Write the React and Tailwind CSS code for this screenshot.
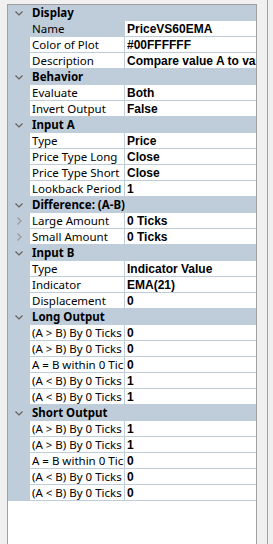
const sections = [
  {
    title: "Display",
    rows: [
      ["Name", "PriceVS60EMA", { selected: true }],
      ["Color of Plot", "#00FFFFFF"],
      ["Description", "Compare value A to value B"],
    ],
  },
  {
    title: "Behavior",
    rows: [
      ["Evaluate", "Both"],
      ["Invert Output", "False"],
    ],
  },
  {
    title: "Input A",
    rows: [
      ["Type", "Price"],
      ["Price Type Long", "Close"],
      ["Price Type Short", "Close"],
      ["Lookback Period", "1"],
    ],
  },
  {
    title: "Difference: (A-B)",
    rows: [
      ["Large Amount", "0 Ticks", { expand: true }],
      ["Small Amount", "0 Ticks", { expand: true }],
    ],
  },
  {
    title: "Input B",
    rows: [
      ["Type", "Indicator Value"],
      ["Indicator", "EMA(21)"],
      ["Displacement", "0"],
    ],
  },
  {
    title: "Long Output",
    rows: [
      ["(A > B) By 0 Ticks", "0"],
      ["(A > B) By 0 Ticks", "0"],
      ["A = B within 0 Ticks", "0"],
      ["(A < B) By 0 Ticks", "1"],
      ["(A < B) By 0 Ticks", "1"],
    ],
  },
  {
    title: "Short Output",
    rows: [
      ["(A > B) By 0 Ticks", "1"],
      ["(A > B) By 0 Ticks", "1"],
      ["A = B within 0 Ticks", "0"],
      ["(A < B) By 0 Ticks", "0"],
      ["(A < B) By 0 Ticks", "0"],
    ],
  },
];

const Chevron = () => (
  <svg width="8" height="5" viewBox="0 0 8 5" className="block">
    <path d="M0.5 0.5 L4 4 L7.5 0.5" fill="none" stroke="#5f5f5f" strokeWidth="1.2" />
  </svg>
);

const Arrow = () => (
  <svg width="5" height="8" viewBox="0 0 5 8" className="block">
    <path d="M0.5 0.5 L4 4 L0.5 7.5" fill="none" stroke="#9a9a9a" strokeWidth="1.2" />
  </svg>
);

const label = { fontFamily: '"Noto Sans", "Open Sans", sans-serif' };
const value = { fontFamily: '"Liberation Sans", Arial, sans-serif' };

export default function App() {
  return (
    <div className="w-[273px] h-[544px] bg-[#f0f0f0] flex overflow-hidden">
      {/* grid panel */}
      <div className="ml-[7px] mt-[4px] w-[250px] bg-white border-l border-r border-t border-[#a0a0a0] flex flex-col">
        {sections.map((s) => (
          <div key={s.title}>
            {/* category header */}
            <div className="h-[16px] bg-[#bfcddb] flex items-center">
              <div className="w-[22px] flex justify-center">
                <Chevron />
              </div>
              <span
                className="ml-[2px] text-[11.5px] font-bold text-black leading-none whitespace-nowrap"
                style={label}
              >
                {s.title}
              </span>
            </div>
            {s.rows.map(([k, v, opt = {}], i) => (
              <div key={i} className="h-[16px] flex bg-[#bfcddb]">
                <div className="w-[22px] flex items-center justify-center">
                  {opt.expand && <Arrow />}
                </div>
                <div
                  className={`w-[94px] h-[15px] flex items-center pl-[2px] overflow-hidden ${opt.selected ? "bg-[#bfcddb]" : "bg-white"}`}
                >
                  <span className="text-[11.5px] text-black leading-none whitespace-nowrap" style={label}>
                    {k}
                  </span>
                </div>
                <div className="w-[1px]" />
                <div className="w-[131px] h-[15px] bg-white flex items-center pl-[2px] overflow-hidden">
                  <span className="text-[12px] font-bold text-black leading-none whitespace-nowrap" style={value}>
                    {v}
                  </span>
                </div>
              </div>
            ))}
          </div>
        ))}
      </div>
      {/* right gutter */}
      <div className="ml-[10px] w-[1px] h-full bg-[#a0a0a0]" />
    </div>
  );
}
